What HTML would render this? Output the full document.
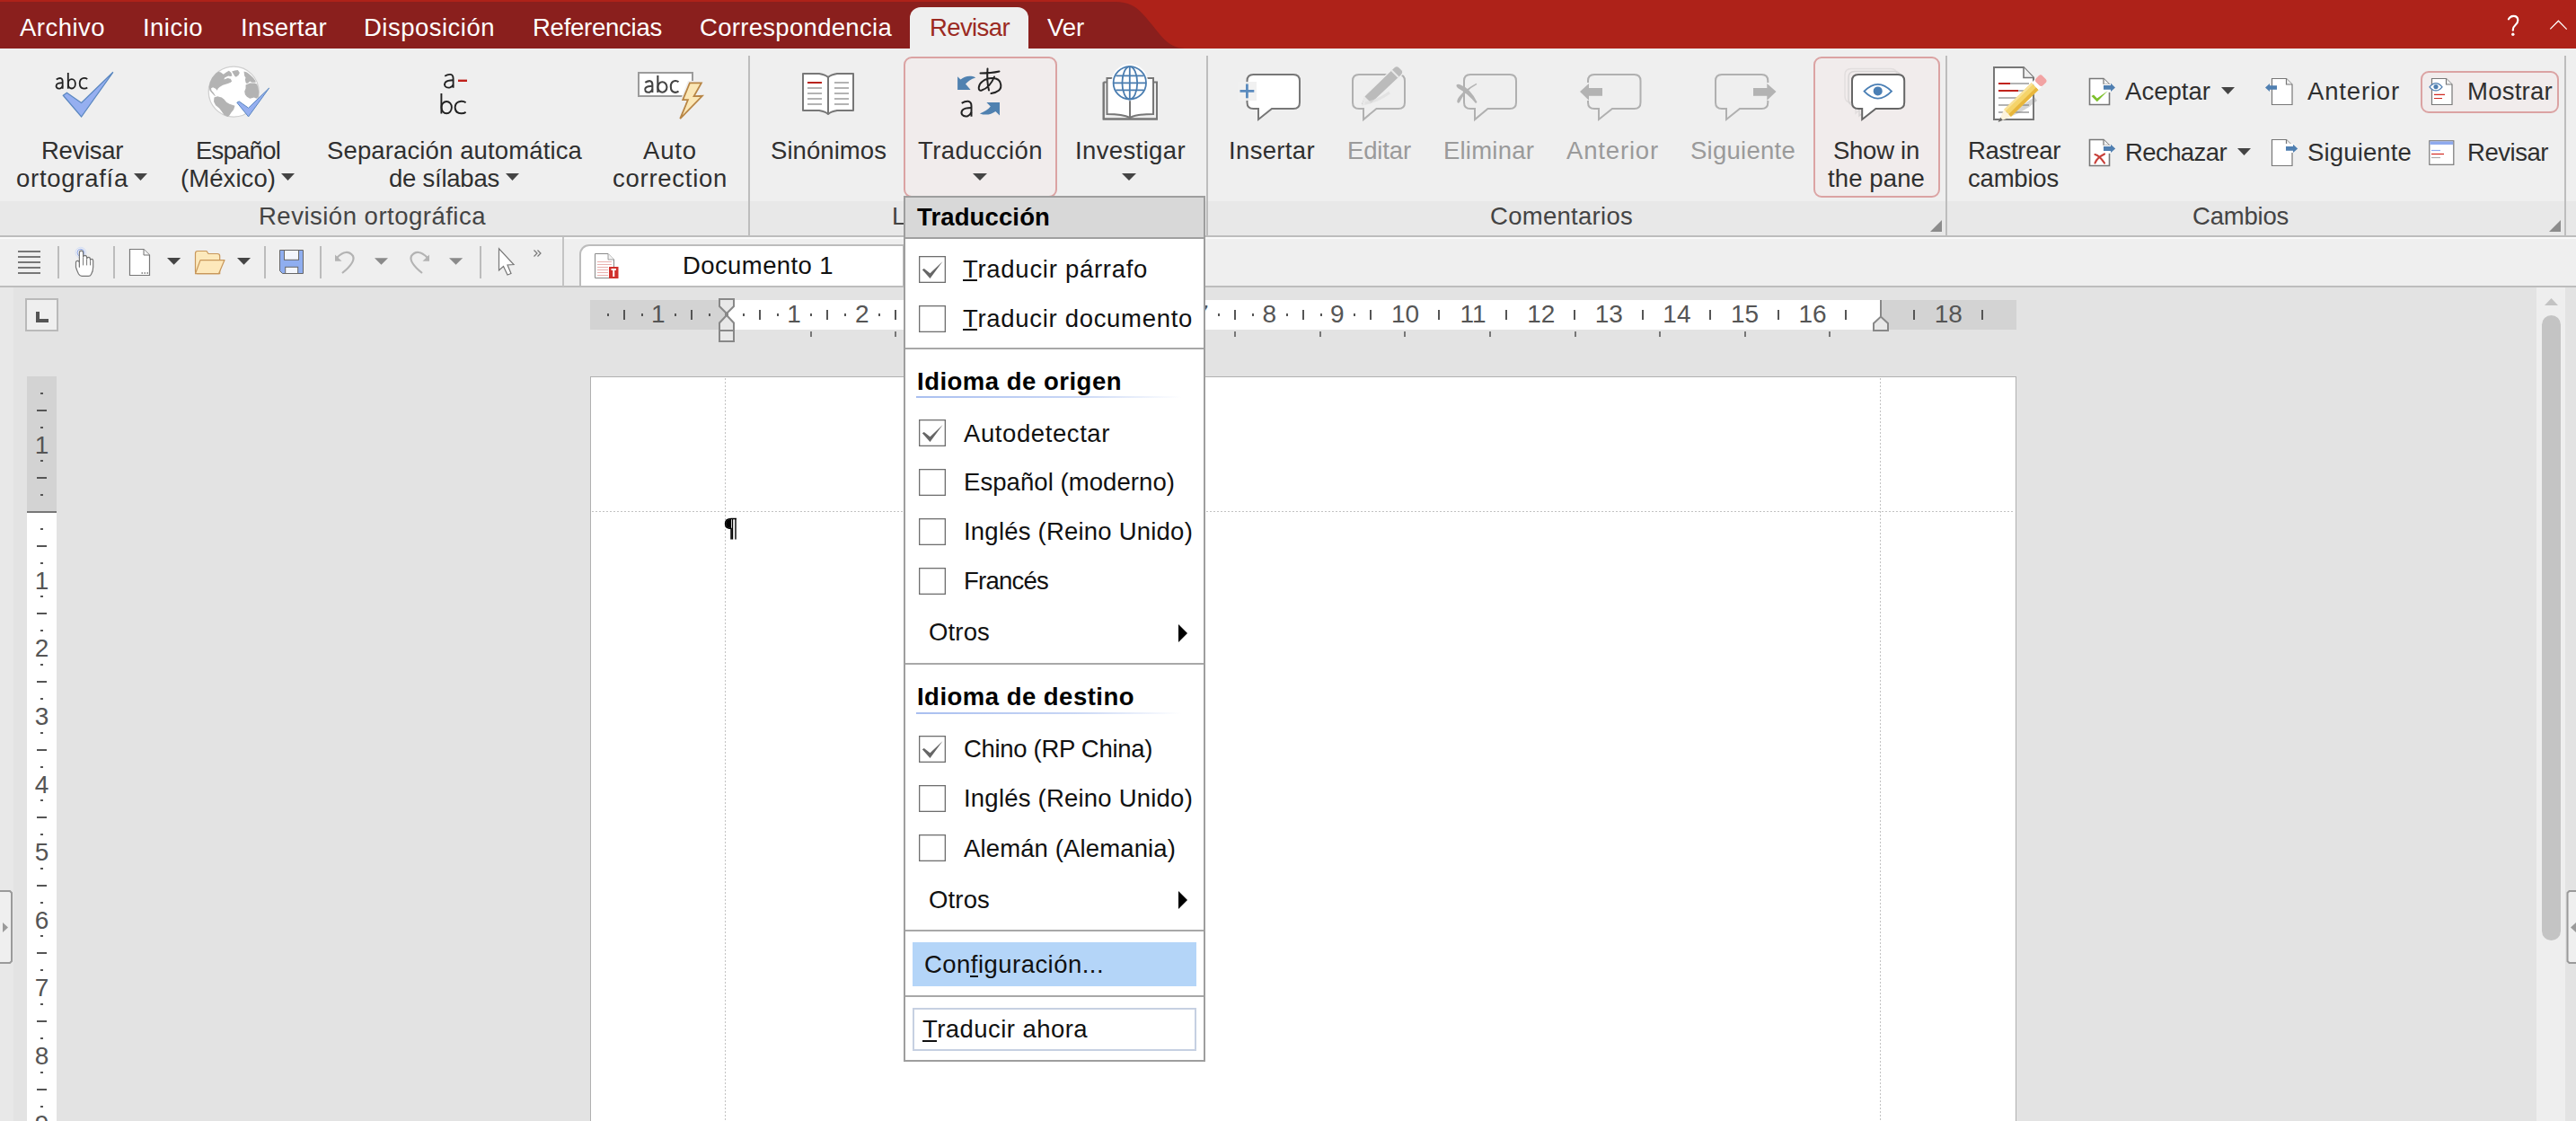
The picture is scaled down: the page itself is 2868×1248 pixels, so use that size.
<!DOCTYPE html><html><head><meta charset="utf-8"><style>
html,body{margin:0;padding:0;width:2868px;height:1248px;overflow:hidden;background:#e3e3e3}
body>div,body>svg{position:absolute}
.t{white-space:nowrap;font-family:"Liberation Sans",sans-serif}
body{font-family:"Liberation Sans",sans-serif}
</style></head><body>
<div style="left:0px;top:0px;width:2868px;height:1248px;background:#e3e3e3;"></div>
<div style="left:0px;top:0px;width:2868px;height:54px;background:#ae2219;"></div>
<svg style="left:0px;top:0px" width="1400" height="54" viewBox="0 0 1400 54"><path d="M0 2 H1242 C1262 2 1270 12 1283 28 C1297 46 1304 54 1322 54 H0 Z" fill="#8a1f1d"/></svg>
<div style="left:1013px;top:8px;width:132px;height:47px;background:#efefef;border-radius:12px 12px 0 0;"></div>
<div class="t" style="left:22.00px;top:16.72px;font-size:27.5px;line-height:27.5px;color:#ffffff;letter-spacing:0.472px;">Archivo</div>
<div class="t" style="left:159.00px;top:16.72px;font-size:27.5px;line-height:27.5px;color:#ffffff;letter-spacing:0.467px;">Inicio</div>
<div class="t" style="left:268.00px;top:16.72px;font-size:27.5px;line-height:27.5px;color:#ffffff;letter-spacing:0.346px;">Insertar</div>
<div class="t" style="left:405.00px;top:16.72px;font-size:27.5px;line-height:27.5px;color:#ffffff;letter-spacing:0.490px;">Disposición</div>
<div class="t" style="left:593.00px;top:16.72px;font-size:27.5px;line-height:27.5px;color:#ffffff;letter-spacing:-0.249px;">Referencias</div>
<div class="t" style="left:779.00px;top:16.72px;font-size:27.5px;line-height:27.5px;color:#ffffff;letter-spacing:0.305px;">Correspondencia</div>
<div class="t" style="left:1035.00px;top:16.72px;font-size:27.5px;line-height:27.5px;color:#9b2a22;letter-spacing:-0.602px;">Revisar</div>
<div class="t" style="left:1166.00px;top:16.72px;font-size:27.5px;line-height:27.5px;color:#ffffff;letter-spacing:-0.092px;">Ver</div>
<svg style="left:0px;top:0px" width="2868" height="50" viewBox="0 0 2868 50"><path d="M2793 21.3 Q2794.8 17.9 2798.4 17.9 Q2803.3 17.9 2803.3 22.6 Q2803.3 25.6 2800.4 28 Q2797.6 30.4 2797.8 33.6" fill="none" stroke="#fff" stroke-width="2.2" stroke-linecap="round"/><circle cx="2797.8" cy="38.3" r="1.7" fill="#fff"/><path d="M2839.3 32.4 L2848.4 23.2 L2857.7 32.6" fill="none" stroke="#fff" stroke-width="1.3"/></svg>
<div style="left:0px;top:54px;width:2868px;height:170px;background:#efefef;"></div>
<div style="left:0px;top:224px;width:2868px;height:38px;background:#e8e8e8;"></div>
<div style="left:0px;top:262px;width:2868px;height:2px;background:#bdbdbd;"></div>
<div style="left:833px;top:62px;width:2px;height:201px;background:#bdbdbd;"></div>
<div style="left:1343px;top:62px;width:2px;height:201px;background:#bdbdbd;"></div>
<div style="left:2166px;top:62px;width:2px;height:201px;background:#bdbdbd;"></div>
<div style="left:2855px;top:62px;width:2px;height:201px;background:#bdbdbd;"></div>
<div class="t" style="left:288.00px;top:226.72px;font-size:27.5px;line-height:27.5px;color:#444;letter-spacing:0.499px;">Revisión ortográfica</div>
<div class="t" style="left:993.00px;top:226.72px;font-size:27.5px;line-height:27.5px;color:#444;">Lenguaje</div>
<div class="t" style="left:1659.00px;top:226.72px;font-size:27.5px;line-height:27.5px;color:#444;letter-spacing:0.282px;">Comentarios</div>
<div class="t" style="left:2441.00px;top:226.72px;font-size:27.5px;line-height:27.5px;color:#444;letter-spacing:-0.215px;">Cambios</div>
<div class="t" style="left:46.00px;top:153.72px;font-size:27.5px;line-height:27.5px;color:#2f2f2f;letter-spacing:-0.316px;">Revisar</div>
<div class="t" style="left:18.00px;top:184.72px;font-size:27.5px;line-height:27.5px;color:#2f2f2f;letter-spacing:0.729px;">ortografía</div>
<div class="t" style="left:218.00px;top:153.72px;font-size:27.5px;line-height:27.5px;color:#2f2f2f;letter-spacing:-0.768px;">Español</div>
<div class="t" style="left:201.00px;top:184.72px;font-size:27.5px;line-height:27.5px;color:#2f2f2f;letter-spacing:0.072px;">(México)</div>
<div class="t" style="left:364.00px;top:153.72px;font-size:27.5px;line-height:27.5px;color:#2f2f2f;letter-spacing:0.130px;">Separación automática</div>
<div class="t" style="left:433.00px;top:184.72px;font-size:27.5px;line-height:27.5px;color:#2f2f2f;letter-spacing:-0.236px;">de sílabas</div>
<div class="t" style="left:716.00px;top:153.72px;font-size:27.5px;line-height:27.5px;color:#2f2f2f;letter-spacing:0.857px;">Auto</div>
<div class="t" style="left:682.00px;top:184.72px;font-size:27.5px;line-height:27.5px;color:#2f2f2f;letter-spacing:0.726px;">correction</div>
<div class="t" style="left:858.00px;top:153.72px;font-size:27.5px;line-height:27.5px;color:#2f2f2f;letter-spacing:0.067px;">Sinónimos</div>
<div style="left:1006px;top:63px;width:171px;height:157px;background:#f1ecec;border:2px solid #dba3a3;border-radius:9px;box-sizing:border-box;"></div>
<div class="t" style="left:1022.00px;top:153.72px;font-size:27.5px;line-height:27.5px;color:#2f2f2f;letter-spacing:0.399px;">Traducción</div>
<div class="t" style="left:1197.00px;top:153.72px;font-size:27.5px;line-height:27.5px;color:#2f2f2f;letter-spacing:0.378px;">Investigar</div>
<div class="t" style="left:1368.00px;top:153.72px;font-size:27.5px;line-height:27.5px;color:#2f2f2f;letter-spacing:0.346px;">Insertar</div>
<div class="t" style="left:1500.00px;top:153.72px;font-size:27.5px;line-height:27.5px;color:#9a9a9a;letter-spacing:-0.140px;">Editar</div>
<div class="t" style="left:1607.00px;top:153.72px;font-size:27.5px;line-height:27.5px;color:#9a9a9a;letter-spacing:0.210px;">Eliminar</div>
<div class="t" style="left:1744.00px;top:153.72px;font-size:27.5px;line-height:27.5px;color:#9a9a9a;letter-spacing:0.839px;">Anterior</div>
<div class="t" style="left:1882.00px;top:153.72px;font-size:27.5px;line-height:27.5px;color:#9a9a9a;letter-spacing:0.259px;">Siguiente</div>
<div style="left:2019px;top:63px;width:141px;height:157px;background:#f1ecec;border:2px solid #dba3a3;border-radius:9px;box-sizing:border-box;"></div>
<div class="t" style="left:2041.00px;top:153.72px;font-size:27.5px;line-height:27.5px;color:#2f2f2f;letter-spacing:-0.262px;">Show in</div>
<div class="t" style="left:2035.00px;top:184.72px;font-size:27.5px;line-height:27.5px;color:#2f2f2f;letter-spacing:0.120px;">the pane</div>
<div class="t" style="left:2191.00px;top:153.72px;font-size:27.5px;line-height:27.5px;color:#2f2f2f;letter-spacing:-0.306px;">Rastrear</div>
<div class="t" style="left:2191.00px;top:184.72px;font-size:27.5px;line-height:27.5px;color:#2f2f2f;letter-spacing:-0.200px;">cambios</div>
<div class="t" style="left:2366.00px;top:87.72px;font-size:27.5px;line-height:27.5px;color:#2f2f2f;letter-spacing:0.033px;">Aceptar</div>
<div class="t" style="left:2569.00px;top:87.72px;font-size:27.5px;line-height:27.5px;color:#2f2f2f;letter-spacing:0.839px;">Anterior</div>
<div style="left:2695px;top:79px;width:154px;height:47px;background:#f1ecec;border:2px solid #dba3a3;border-radius:9px;box-sizing:border-box;"></div>
<div class="t" style="left:2747.00px;top:87.72px;font-size:27.5px;line-height:27.5px;color:#2f2f2f;letter-spacing:0.257px;">Mostrar</div>
<div class="t" style="left:2366.00px;top:155.72px;font-size:27.5px;line-height:27.5px;color:#2f2f2f;letter-spacing:-0.587px;">Rechazar</div>
<div class="t" style="left:2569.00px;top:155.72px;font-size:27.5px;line-height:27.5px;color:#2f2f2f;letter-spacing:0.148px;">Siguiente</div>
<div class="t" style="left:2747.00px;top:155.72px;font-size:27.5px;line-height:27.5px;color:#2f2f2f;letter-spacing:-0.459px;">Revisar</div>
<svg style="left:149px;top:193px" width="15" height="8" viewBox="0 0 15 8"><path d="M0 0 H15 L7.5 8 Z" fill="#444"/></svg>
<svg style="left:313px;top:193px" width="15" height="8" viewBox="0 0 15 8"><path d="M0 0 H15 L7.5 8 Z" fill="#444"/></svg>
<svg style="left:563px;top:193px" width="15" height="8" viewBox="0 0 15 8"><path d="M0 0 H15 L7.5 8 Z" fill="#444"/></svg>
<svg style="left:1083px;top:193px" width="16" height="8" viewBox="0 0 16 8"><path d="M0 0 H16 L8.0 8 Z" fill="#444"/></svg>
<svg style="left:1249px;top:193px" width="16" height="8" viewBox="0 0 16 8"><path d="M0 0 H16 L8.0 8 Z" fill="#444"/></svg>
<svg style="left:2473px;top:97px" width="15" height="8" viewBox="0 0 15 8"><path d="M0 0 H15 L7.5 8 Z" fill="#444"/></svg>
<svg style="left:2491px;top:165px" width="15" height="8" viewBox="0 0 15 8"><path d="M0 0 H15 L7.5 8 Z" fill="#444"/></svg>
<div style="left:0px;top:264px;width:2868px;height:55px;background:#efefef;"></div>
<div style="left:0px;top:264px;width:2868px;height:2px;background:#fafafa;"></div>
<div style="left:0px;top:318px;width:2868px;height:2px;background:#bdbdbd;"></div>
<div style="left:626px;top:264px;width:2px;height:55px;background:#c4c4c4;"></div>
<div style="left:64px;top:274px;width:2px;height:36px;background:#bcbcbc;"></div>
<div style="left:126px;top:274px;width:2px;height:36px;background:#bcbcbc;"></div>
<div style="left:294px;top:274px;width:2px;height:36px;background:#bcbcbc;"></div>
<div style="left:356px;top:274px;width:2px;height:36px;background:#bcbcbc;"></div>
<div style="left:534px;top:274px;width:2px;height:36px;background:#bcbcbc;"></div>
<div style="left:645px;top:272px;width:362px;height:46px;background:#fff;border:2px solid #bcbcbc;border-bottom:none;border-radius:11px 0 0 0;box-sizing:border-box;"></div>
<div class="t" style="left:760.00px;top:281.72px;font-size:27.5px;line-height:27.5px;color:#111;letter-spacing:0.404px;">Documento 1</div>
<div style="left:0px;top:320px;width:15px;height:928px;background:#e8e8e8;"></div>
<div style="left:28px;top:332px;width:37px;height:37px;background:#efefef;border:2px solid #b9b9b9;box-sizing:border-box;"></div>
<div style="left:657px;top:334px;width:1588px;height:33px;background:#d3d3d3;"></div>
<div style="left:808px;top:334px;width:1287px;height:33px;background:#ffffff;"></div>
<div style="left:30px;top:419px;width:33px;height:829px;background:#ffffff;"></div>
<div style="left:30px;top:419px;width:33px;height:151px;background:#d3d3d3;"></div>
<div style="left:657px;top:419px;width:1588px;height:829px;background:#ffffff;border-left:1px solid #b0b0b0;border-top:1px solid #b0b0b0;border-right:1px solid #b0b0b0;box-sizing:border-box;"></div>
<div style="left:2824px;top:320px;width:32px;height:928px;background:#eeeeee;"></div>
<div style="left:2830px;top:351px;width:21px;height:696px;background:#c4c4c4;border-radius:11px;"></div>
<div style="left:40px;top:347px;width:4px;height:12px;background:#555;"></div>
<div style="left:40px;top:355px;width:14px;height:4px;background:#555;"></div>
<div class="t" style="left:725.11px;top:336.29px;font-size:28px;line-height:28px;color:#555;">1</div>
<div class="t" style="left:876.31px;top:336.29px;font-size:28px;line-height:28px;color:#555;">1</div>
<div class="t" style="left:951.91px;top:336.29px;font-size:28px;line-height:28px;color:#555;">2</div>
<div class="t" style="left:1027.51px;top:336.29px;font-size:28px;line-height:28px;color:#555;">3</div>
<div class="t" style="left:1103.11px;top:336.29px;font-size:28px;line-height:28px;color:#555;">4</div>
<div class="t" style="left:1178.71px;top:336.29px;font-size:28px;line-height:28px;color:#555;">5</div>
<div class="t" style="left:1254.31px;top:336.29px;font-size:28px;line-height:28px;color:#555;">6</div>
<div class="t" style="left:1329.91px;top:336.29px;font-size:28px;line-height:28px;color:#555;">7</div>
<div class="t" style="left:1405.51px;top:336.29px;font-size:28px;line-height:28px;color:#555;">8</div>
<div class="t" style="left:1481.11px;top:336.29px;font-size:28px;line-height:28px;color:#555;">9</div>
<div class="t" style="left:1548.93px;top:336.29px;font-size:28px;line-height:28px;color:#555;">10</div>
<div class="t" style="left:1625.57px;top:336.29px;font-size:28px;line-height:28px;color:#555;">11</div>
<div class="t" style="left:1700.13px;top:336.29px;font-size:28px;line-height:28px;color:#555;">12</div>
<div class="t" style="left:1775.73px;top:336.29px;font-size:28px;line-height:28px;color:#555;">13</div>
<div class="t" style="left:1851.33px;top:336.29px;font-size:28px;line-height:28px;color:#555;">14</div>
<div class="t" style="left:1926.93px;top:336.29px;font-size:28px;line-height:28px;color:#555;">15</div>
<div class="t" style="left:2002.53px;top:336.29px;font-size:28px;line-height:28px;color:#555;">16</div>
<div class="t" style="left:2153.73px;top:336.29px;font-size:28px;line-height:28px;color:#555;">18</div>
<div style="left:676px;top:349px;width:2px;height:3px;background:#555555;"></div>
<div style="left:694px;top:345px;width:2px;height:11px;background:#555555;"></div>
<div style="left:714px;top:349px;width:2px;height:3px;background:#555555;"></div>
<div style="left:751px;top:349px;width:2px;height:3px;background:#555555;"></div>
<div style="left:769px;top:345px;width:2px;height:11px;background:#555555;"></div>
<div style="left:789px;top:349px;width:2px;height:3px;background:#555555;"></div>
<div style="left:827px;top:349px;width:2px;height:3px;background:#555555;"></div>
<div style="left:845px;top:345px;width:2px;height:11px;background:#555555;"></div>
<div style="left:865px;top:349px;width:2px;height:3px;background:#555555;"></div>
<div style="left:902px;top:349px;width:2px;height:3px;background:#555555;"></div>
<div style="left:920px;top:345px;width:2px;height:11px;background:#555555;"></div>
<div style="left:940px;top:349px;width:2px;height:3px;background:#555555;"></div>
<div style="left:978px;top:349px;width:2px;height:3px;background:#555555;"></div>
<div style="left:996px;top:345px;width:2px;height:11px;background:#555555;"></div>
<div style="left:1016px;top:349px;width:2px;height:3px;background:#555555;"></div>
<div style="left:1054px;top:349px;width:2px;height:3px;background:#555555;"></div>
<div style="left:1072px;top:345px;width:2px;height:11px;background:#555555;"></div>
<div style="left:1092px;top:349px;width:2px;height:3px;background:#555555;"></div>
<div style="left:1129px;top:349px;width:2px;height:3px;background:#555555;"></div>
<div style="left:1147px;top:345px;width:2px;height:11px;background:#555555;"></div>
<div style="left:1167px;top:349px;width:2px;height:3px;background:#555555;"></div>
<div style="left:1205px;top:349px;width:2px;height:3px;background:#555555;"></div>
<div style="left:1223px;top:345px;width:2px;height:11px;background:#555555;"></div>
<div style="left:1243px;top:349px;width:2px;height:3px;background:#555555;"></div>
<div style="left:1280px;top:349px;width:2px;height:3px;background:#555555;"></div>
<div style="left:1298px;top:345px;width:2px;height:11px;background:#555555;"></div>
<div style="left:1318px;top:349px;width:2px;height:3px;background:#555555;"></div>
<div style="left:1356px;top:349px;width:2px;height:3px;background:#555555;"></div>
<div style="left:1374px;top:345px;width:2px;height:11px;background:#555555;"></div>
<div style="left:1394px;top:349px;width:2px;height:3px;background:#555555;"></div>
<div style="left:1432px;top:349px;width:2px;height:3px;background:#555555;"></div>
<div style="left:1450px;top:345px;width:2px;height:11px;background:#555555;"></div>
<div style="left:1470px;top:349px;width:2px;height:3px;background:#555555;"></div>
<div style="left:1507px;top:349px;width:2px;height:3px;background:#555555;"></div>
<div style="left:1525px;top:345px;width:2px;height:11px;background:#555555;"></div>
<div style="left:1601px;top:345px;width:2px;height:11px;background:#555555;"></div>
<div style="left:1676px;top:345px;width:2px;height:11px;background:#555555;"></div>
<div style="left:1752px;top:345px;width:2px;height:11px;background:#555555;"></div>
<div style="left:1828px;top:345px;width:2px;height:11px;background:#555555;"></div>
<div style="left:1903px;top:345px;width:2px;height:11px;background:#555555;"></div>
<div style="left:1979px;top:345px;width:2px;height:11px;background:#555555;"></div>
<div style="left:2054px;top:345px;width:2px;height:11px;background:#555555;"></div>
<div style="left:2130px;top:345px;width:2px;height:11px;background:#555555;"></div>
<div style="left:2206px;top:345px;width:2px;height:11px;background:#555555;"></div>
<div style="left:902px;top:369px;width:2px;height:6px;background:#777;"></div>
<div style="left:996px;top:369px;width:2px;height:6px;background:#777;"></div>
<div style="left:1091px;top:369px;width:2px;height:6px;background:#777;"></div>
<div style="left:1185px;top:369px;width:2px;height:6px;background:#777;"></div>
<div style="left:1280px;top:369px;width:2px;height:6px;background:#777;"></div>
<div style="left:1374px;top:369px;width:2px;height:6px;background:#777;"></div>
<div style="left:1469px;top:369px;width:2px;height:6px;background:#777;"></div>
<div style="left:1563px;top:369px;width:2px;height:6px;background:#777;"></div>
<div style="left:1658px;top:369px;width:2px;height:6px;background:#777;"></div>
<div style="left:1753px;top:369px;width:2px;height:6px;background:#777;"></div>
<div style="left:1847px;top:369px;width:2px;height:6px;background:#777;"></div>
<div style="left:1942px;top:369px;width:2px;height:6px;background:#777;"></div>
<div style="left:2036px;top:369px;width:2px;height:6px;background:#777;"></div>
<svg style="left:0px;top:0px" width="830" height="390" viewBox="0 0 830 390"><path d="M801 333 H817 V341 L810 348 V352 L817 359.5 V380 H801 V359.5 L808 352 V348 L801 341 Z" fill="#e8e8e8" stroke="#888" stroke-width="2" stroke-linejoin="miter"/><path d="M801 368 H817" stroke="#888" stroke-width="2"/></svg>
<svg style="left:0px;top:0px" width="2110" height="390" viewBox="0 0 2110 390"><path d="M2094 334 V352" stroke="#888" stroke-width="2"/><path d="M2086 360 L2094 352.5 L2102 360 V368 H2086 Z" fill="#e8e8e8" stroke="#888" stroke-width="2"/></svg>
<div style="left:30px;top:569px;width:33px;height:2px;background:#777;"></div>
<div style="left:45px;top:437px;width:3px;height:2px;background:#555555;"></div>
<div style="left:41px;top:456px;width:11px;height:2px;background:#555555;"></div>
<div style="left:45px;top:475px;width:3px;height:2px;background:#555555;"></div>
<div class="t" style="left:38.71px;top:481.69px;font-size:28px;line-height:28px;color:#555;">1</div>
<div style="left:45px;top:512px;width:3px;height:2px;background:#555555;"></div>
<div style="left:41px;top:531px;width:11px;height:2px;background:#555555;"></div>
<div style="left:45px;top:550px;width:3px;height:2px;background:#555555;"></div>
<div style="left:45px;top:588px;width:3px;height:2px;background:#555555;"></div>
<div style="left:41px;top:607px;width:11px;height:2px;background:#555555;"></div>
<div style="left:45px;top:626px;width:3px;height:2px;background:#555555;"></div>
<div class="t" style="left:38.71px;top:632.89px;font-size:28px;line-height:28px;color:#555;">1</div>
<div style="left:45px;top:663px;width:3px;height:2px;background:#555555;"></div>
<div style="left:41px;top:682px;width:11px;height:2px;background:#555555;"></div>
<div style="left:45px;top:701px;width:3px;height:2px;background:#555555;"></div>
<div class="t" style="left:38.71px;top:708.49px;font-size:28px;line-height:28px;color:#555;">2</div>
<div style="left:45px;top:739px;width:3px;height:2px;background:#555555;"></div>
<div style="left:41px;top:758px;width:11px;height:2px;background:#555555;"></div>
<div style="left:45px;top:777px;width:3px;height:2px;background:#555555;"></div>
<div class="t" style="left:38.71px;top:784.09px;font-size:28px;line-height:28px;color:#555;">3</div>
<div style="left:45px;top:815px;width:3px;height:2px;background:#555555;"></div>
<div style="left:41px;top:834px;width:11px;height:2px;background:#555555;"></div>
<div style="left:45px;top:853px;width:3px;height:2px;background:#555555;"></div>
<div class="t" style="left:38.71px;top:859.69px;font-size:28px;line-height:28px;color:#555;">4</div>
<div style="left:45px;top:890px;width:3px;height:2px;background:#555555;"></div>
<div style="left:41px;top:909px;width:11px;height:2px;background:#555555;"></div>
<div style="left:45px;top:928px;width:3px;height:2px;background:#555555;"></div>
<div class="t" style="left:38.71px;top:935.29px;font-size:28px;line-height:28px;color:#555;">5</div>
<div style="left:45px;top:966px;width:3px;height:2px;background:#555555;"></div>
<div style="left:41px;top:985px;width:11px;height:2px;background:#555555;"></div>
<div style="left:45px;top:1004px;width:3px;height:2px;background:#555555;"></div>
<div class="t" style="left:38.71px;top:1010.89px;font-size:28px;line-height:28px;color:#555;">6</div>
<div style="left:45px;top:1041px;width:3px;height:2px;background:#555555;"></div>
<div style="left:41px;top:1060px;width:11px;height:2px;background:#555555;"></div>
<div style="left:45px;top:1079px;width:3px;height:2px;background:#555555;"></div>
<div class="t" style="left:38.71px;top:1086.49px;font-size:28px;line-height:28px;color:#555;">7</div>
<div style="left:45px;top:1117px;width:3px;height:2px;background:#555555;"></div>
<div style="left:41px;top:1136px;width:11px;height:2px;background:#555555;"></div>
<div style="left:45px;top:1155px;width:3px;height:2px;background:#555555;"></div>
<div class="t" style="left:38.71px;top:1162.09px;font-size:28px;line-height:28px;color:#555;">8</div>
<div style="left:45px;top:1193px;width:3px;height:2px;background:#555555;"></div>
<div style="left:41px;top:1212px;width:11px;height:2px;background:#555555;"></div>
<div style="left:45px;top:1231px;width:3px;height:2px;background:#555555;"></div>
<div class="t" style="left:38.71px;top:1237.69px;font-size:28px;line-height:28px;color:#555;">9</div>
<div style="left:807px;top:421px;width:1px;height:827px;background:repeating-linear-gradient(180deg,#c2c2c2 0 2px,transparent 2px 4px);"></div>
<div style="left:2093px;top:421px;width:1px;height:827px;background:repeating-linear-gradient(180deg,#c2c2c2 0 2px,transparent 2px 4px);"></div>
<div style="left:659px;top:569px;width:1584px;height:1px;background:repeating-linear-gradient(90deg,#c2c2c2 0 2px,transparent 2px 4px);"></div>
<svg style="left:0px;top:0px" width="830" height="610" viewBox="0 0 830 610"><path d="M820 577.5 H814 Q807.5 577.5 807.5 583 Q807.5 588.5 814 588.5 V600.5 M815.5 578 V600.5 M819 578 V600.5" fill="none" stroke="#000" stroke-width="1.4"/><path d="M814 578 Q808 578 808 583 Q808 588 814 588 Z" fill="#000"/></svg>
<svg style="left:0px;top:0px" width="2860" height="350" viewBox="0 0 2860 350"><path d="M2833 340 L2840.5 332 L2848 340 Z" fill="#c3c3c3"/></svg>
<svg style="left:0px;top:0px" width="20" height="1080" viewBox="0 0 20 1080"><path d="M0 992 H11 L13 994 V1070 L11 1072 H0" fill="#efefef" stroke="#9a9a9a" stroke-width="2"/><path d="M3 1027 L9 1032.5 L3 1038 Z" fill="#9a9a9a"/></svg>
<svg style="left:0px;top:0px" width="2868" height="1080" viewBox="0 0 2868 1080"><path d="M2868 992 H2860.5 L2858.5 994 V1070 L2860.5 1072 H2868" fill="#efefef" stroke="#9a9a9a" stroke-width="2"/><path d="M2868 1027 L2862 1032.5 L2868 1038 Z" fill="#9a9a9a"/></svg>
<div style="left:1006px;top:218px;width:336px;height:964px;background:#ffffff;border:2px solid #9e9e9e;box-sizing:border-box;"></div>
<div style="left:1008px;top:220px;width:332px;height:45px;background:#d8d8d8;"></div>
<div style="left:1008px;top:264px;width:332px;height:2px;background:#a0a0a0;"></div>
<div class="t" style="left:1021.00px;top:227.72px;font-size:27.5px;line-height:27.5px;color:#000;letter-spacing:0.130px;font-weight:bold;">Traducción</div>
<svg style="left:1023px;top:285px" width="30" height="30" viewBox="0 0 30 30"><rect x="0.65" y="0.65" width="28.7" height="28.7" fill="#fff" stroke="#6e6e6e" stroke-width="1.3"/><path d="M3.8 15.3 L5.8 13.9 L12.5 19.3 L26.5 6 L12.5 24.9 Z" fill="#666"/></svg>
<div class="t" style="left:1072.00px;top:285.72px;font-size:27.5px;line-height:27.5px;color:#111;letter-spacing:0.712px;">Traducir párrafo</div>
<div style="left:1072px;top:311px;width:16px;height:2px;background:#111;"></div>
<svg style="left:1023px;top:340px" width="30" height="30" viewBox="0 0 30 30"><rect x="0.65" y="0.65" width="28.7" height="28.7" fill="#fff" stroke="#6e6e6e" stroke-width="1.3"/></svg>
<div class="t" style="left:1072.00px;top:340.72px;font-size:27.5px;line-height:27.5px;color:#111;letter-spacing:0.692px;">Traducir documento</div>
<div style="left:1072px;top:366px;width:16px;height:2px;background:#111;"></div>
<div style="left:1008px;top:387px;width:332px;height:2px;background:#a8a8a8;"></div>
<div class="t" style="left:1021.00px;top:410.72px;font-size:27.5px;line-height:27.5px;color:#000;letter-spacing:0.498px;font-weight:bold;">Idioma de origen</div>
<div style="left:1020px;top:441px;width:295px;height:2px;background:linear-gradient(90deg,#a9bff0,#c8d6f5 60%,#ffffff);"></div>
<svg style="left:1023px;top:467px" width="30" height="30" viewBox="0 0 30 30"><rect x="0.65" y="0.65" width="28.7" height="28.7" fill="#fff" stroke="#6e6e6e" stroke-width="1.3"/><path d="M3.8 15.3 L5.8 13.9 L12.5 19.3 L26.5 6 L12.5 24.9 Z" fill="#666"/></svg>
<div class="t" style="left:1073.00px;top:468.72px;font-size:27.5px;line-height:27.5px;color:#111;letter-spacing:0.589px;">Autodetectar</div>
<svg style="left:1023px;top:522px" width="30" height="30" viewBox="0 0 30 30"><rect x="0.65" y="0.65" width="28.7" height="28.7" fill="#fff" stroke="#6e6e6e" stroke-width="1.3"/></svg>
<div class="t" style="left:1073.00px;top:522.72px;font-size:27.5px;line-height:27.5px;color:#111;letter-spacing:0.067px;">Español (moderno)</div>
<svg style="left:1023px;top:577px" width="30" height="30" viewBox="0 0 30 30"><rect x="0.65" y="0.65" width="28.7" height="28.7" fill="#fff" stroke="#6e6e6e" stroke-width="1.3"/></svg>
<div class="t" style="left:1073.00px;top:577.72px;font-size:27.5px;line-height:27.5px;color:#111;letter-spacing:0.216px;">Inglés (Reino Unido)</div>
<svg style="left:1023px;top:632px" width="30" height="30" viewBox="0 0 30 30"><rect x="0.65" y="0.65" width="28.7" height="28.7" fill="#fff" stroke="#6e6e6e" stroke-width="1.3"/></svg>
<div class="t" style="left:1073.00px;top:632.72px;font-size:27.5px;line-height:27.5px;color:#111;letter-spacing:-0.763px;">Francés</div>
<div class="t" style="left:1034.00px;top:689.72px;font-size:27.5px;line-height:27.5px;color:#111;letter-spacing:0.153px;">Otros</div>
<svg style="left:1312px;top:695px" width="11" height="20" viewBox="0 0 11 20"><path d="M0 0 L10 10 L0 20 Z" fill="#000"/></svg>
<div style="left:1008px;top:738px;width:332px;height:2px;background:#a8a8a8;"></div>
<div class="t" style="left:1021.00px;top:761.72px;font-size:27.5px;line-height:27.5px;color:#000;letter-spacing:0.484px;font-weight:bold;">Idioma de destino</div>
<div style="left:1020px;top:793px;width:295px;height:2px;background:linear-gradient(90deg,#a9bff0,#c8d6f5 60%,#ffffff);"></div>
<svg style="left:1023px;top:819px" width="30" height="30" viewBox="0 0 30 30"><rect x="0.65" y="0.65" width="28.7" height="28.7" fill="#fff" stroke="#6e6e6e" stroke-width="1.3"/><path d="M3.8 15.3 L5.8 13.9 L12.5 19.3 L26.5 6 L12.5 24.9 Z" fill="#666"/></svg>
<div class="t" style="left:1073.00px;top:819.72px;font-size:27.5px;line-height:27.5px;color:#111;letter-spacing:-0.313px;">Chino (RP China)</div>
<svg style="left:1023px;top:874px" width="30" height="30" viewBox="0 0 30 30"><rect x="0.65" y="0.65" width="28.7" height="28.7" fill="#fff" stroke="#6e6e6e" stroke-width="1.3"/></svg>
<div class="t" style="left:1073.00px;top:874.72px;font-size:27.5px;line-height:27.5px;color:#111;letter-spacing:0.216px;">Inglés (Reino Unido)</div>
<svg style="left:1023px;top:929px" width="30" height="30" viewBox="0 0 30 30"><rect x="0.65" y="0.65" width="28.7" height="28.7" fill="#fff" stroke="#6e6e6e" stroke-width="1.3"/></svg>
<div class="t" style="left:1073.00px;top:930.72px;font-size:27.5px;line-height:27.5px;color:#111;letter-spacing:0.127px;">Alemán (Alemania)</div>
<div class="t" style="left:1034.00px;top:987.72px;font-size:27.5px;line-height:27.5px;color:#111;letter-spacing:0.153px;">Otros</div>
<svg style="left:1312px;top:992px" width="11" height="20" viewBox="0 0 11 20"><path d="M0 0 L10 10 L0 20 Z" fill="#000"/></svg>
<div style="left:1008px;top:1035px;width:332px;height:2px;background:#a8a8a8;"></div>
<div style="left:1016px;top:1049px;width:316px;height:49px;background:#b4d5f8;"></div>
<div class="t" style="left:1029.00px;top:1059.72px;font-size:27.5px;line-height:27.5px;color:#111;letter-spacing:0.462px;">Configuración...</div>
<div style="left:1080px;top:1086px;width:9px;height:2px;background:#111;"></div>
<div style="left:1008px;top:1108px;width:332px;height:2px;background:#a8a8a8;"></div>
<div style="left:1016px;top:1122px;width:316px;height:48px;background:#ffffff;border:2px solid #c6d0e2;box-sizing:border-box;"></div>
<div class="t" style="left:1027.00px;top:1131.72px;font-size:27.5px;line-height:27.5px;color:#111;letter-spacing:0.442px;">Traducir ahora</div>
<div style="left:1027px;top:1158px;width:16px;height:2px;background:#111;"></div>
<svg style="left:0px;top:0px" width="140" height="140" viewBox="0 0 140 140"><g fill="none" stroke="#222" stroke-width="1.8"><path d="M62.74 88.56 Q65.29 86.82 67.54 87.05 Q69.70 87.49 69.70 90.69 V98.75"/><path d="M69.70 92.08 Q64.88 92.08 63.20 93.89 Q62.05 95.61 63.04 97.33 Q64.48 99.06 67.18 98.39 Q69.07 97.68 69.70 95.43"/><path d="M75.80 81 V98.75"/><ellipse cx="79.85" cy="93.30" rx="4.05" ry="5.21"/><path d="M97.21 88.09 Q95.55 86.66 93.39 86.90 Q88.69 87.61 88.69 92.83 Q88.79 98.28 93.39 98.63 Q95.55 98.75 97.21 97.45"/></g></svg>
<svg style="left:0px;top:0px" width="140" height="140" viewBox="0 0 140 140"><path d="M70.3 106.25 L74.4 103.25 L90.6 114.5 L125.9 80.3 L90.6 130 Z" fill="#95aff0" stroke="#5a87c0" stroke-width="1.2" stroke-linejoin="miter"/></svg>
<svg style="left:0px;top:0px" width="310" height="140" viewBox="0 0 310 140"><circle cx="260.2" cy="102.1" r="28" fill="#fff" stroke="#cfcfcf" stroke-width="1.2"/>
<g transform="translate(220 65) scale(0.06693)" fill="#b3b3b3">
<path d="M190 470 L205 400 L240 320 L300 250 L345 222 L385 230 L430 265 L470 235 L520 205 L560 240 L575 290 L545 300 L510 290 L450 320 L440 350 L500 330 L550 340 L570 380 L545 405 L480 425 L420 445 L370 475 L340 500 L325 535 L300 505 L255 480 L225 495 L230 530 L270 580 L300 630 L280 620 L240 580 L200 530 Z"/>
<path d="M570 215 L620 200 L670 195 L700 240 L680 280 L640 310 L615 290 L590 250 Z"/>
<path d="M770 215 L820 230 L860 260 L900 300 L930 330 L960 370 L970 400 L900 400 L870 380 L840 410 L815 420 L800 400 L790 350 L800 320 L780 290 Z"/>
<path d="M800 440 L870 410 L950 410 L990 430 L1010 500 L1020 560 L1010 640 L980 670 L940 650 L870 670 L820 640 L790 600 L780 550 L800 500 Z"/>
<path d="M275 650 L330 630 L400 650 L440 680 L480 730 L530 760 L620 790 L600 850 L560 900 L530 950 L500 970 L440 940 L400 880 L360 830 L300 780 L270 720 Z"/>
</g>
<path d="M263.8 114.2 L266.2 112.9 L276.6 120.2 L299.6 98.1 L276.6 129.9 Z" fill="#95aff0" stroke="#5a87c0" stroke-width="1" stroke-linejoin="miter"/></svg>
<svg style="left:0px;top:0px" width="540" height="140" viewBox="0 0 540 140"><g fill="none" stroke="#222" stroke-width="1.9"><path d="M495.2 84.8 Q498.5 82.6 501.5 82.9 Q504.6 83.4 504.6 87.5 V97.8"/><path d="M504.6 89.3 Q498 89.3 495.8 91.6 Q494.3 93.8 495.6 96 Q497.5 98.2 501 97.4 Q503.5 96.5 504.6 94.5"/><path d="M491.4 104 V126.5"/><ellipse cx="497.2" cy="119.6" rx="5.7" ry="6.6"/><path d="M518.6 114.2 Q516.3 112.5 513.3 112.8 Q506.7 113.6 506.6 119.6 Q506.8 125.9 513.3 126.3 Q516.3 126.5 518.6 124.9"/></g><path d="M510 89.8 H520" stroke="#c0201a" stroke-width="2.4"/></svg>
<svg style="left:0px;top:0px" width="800" height="140" viewBox="0 0 800 140"><rect x="711" y="81" width="60" height="26" fill="#fff" stroke="#9b9b9b" stroke-width="2"/>
<path d="M766 90 L784 90 L776 106 L786 106 L756 134 L763 113 L757 113 Z" fill="#efefef"/>
<path d="M767.9 92.4 L780.9 92.4 L772.6 107.1 L781.9 106.8 L757.2 132.2 L765.9 111.2 L760.2 111.2 Z" fill="#fbe7b6" stroke="#b88646" stroke-width="1.8" stroke-linejoin="miter"/></svg>
<svg style="left:0px;top:0px" width="800" height="140" viewBox="0 0 800 140"><g fill="none" stroke="#444" stroke-width="2.1"><path d="M718.32 91.82 Q721.26 89.91 723.86 90.17 Q726.35 90.65 726.35 94.16 V103"/><path d="M726.35 95.68 Q720.79 95.68 718.85 97.67 Q717.52 99.56 718.66 101.44 Q720.33 103.34 723.45 102.61 Q725.63 101.83 726.35 99.36"/><path d="M732.35 84 V103"/><ellipse cx="737.40" cy="97.02" rx="5.05" ry="5.72"/><path d="M755.50 91.30 Q753.80 89.74 751.60 90.00 Q746.80 90.78 746.80 96.50 Q746.90 102.48 751.60 102.87 Q753.80 103.00 755.50 101.57"/></g></svg>
<svg style="left:0px;top:0px" width="960" height="140" viewBox="0 0 960 140"><path d="M894 82 L912 82 C918 83 920 84 922 86 C924 84 926 83 932 82 L950 82 L950 123 L932 123 C926 124 924 125 922 127 C920 125 918 124 912 123 L894 123 Z" fill="#fff" stroke="#777" stroke-width="2" stroke-linejoin="round"/>
<path d="M922 86 V127" stroke="#777" stroke-width="2"/>
<path d="M899 92 H915" stroke="#b8231c" stroke-width="2"/>
<path d="M899 98 H915 M899 104 H915 M899 110 H915 M899 116 H915 M929 92 H945 M929 98 H945 M929 104 H945 M929 110 H945 M929 116 H945" stroke="#b3b3b3" stroke-width="2"/></svg>
<svg style="left:0px;top:0px" width="1130" height="140" viewBox="0 0 1130 140"><path d="M1066.1 85.2 L1069.5 88.6 C1074 85 1080 83.5 1086.2 86.4 C1081 88 1077.5 90.5 1075 93.6 L1080.6 99.9 L1066.1 99.9 Z" fill="#5081b0"/>
<path d="M1098.4 114.1 L1113 114.1 L1113 128.6 L1108.4 124 C1103 128 1097 128.5 1090.9 126.4 C1096 124.5 1100 122 1102.8 118.6 Z" fill="#5081b0"/>
<path d="M1091.5 81.5 C1098 81.5 1106 81 1112.5 79.5 M1099.5 76.5 C1099 84 1099 93 1101 100.5 M1107 85.5 C1104 93 1099 98.5 1093 100.5 C1088 102 1089 94 1094 90.5 C1100 86 1112 85 1114 93 C1116 100 1110 103 1103.5 104" fill="none" stroke="#222" stroke-width="2" stroke-linecap="round"/></svg>
<svg style="left:0px;top:0px" width="1130" height="140" viewBox="0 0 1130 140"><g fill="none" stroke="#222" stroke-width="2.0"><path d="M1070.71 114.92 Q1074.54 112.38 1077.91 112.72 Q1081.50 113.36 1081.50 118.04 V129.8"/><path d="M1081.50 120.06 Q1073.91 120.06 1071.40 122.71 Q1069.67 125.22 1071.16 127.72 Q1073.32 130.25 1077.37 129.28 Q1080.20 128.24 1081.50 124.96"/><path style="display:none" d="M-99.00 -100 V129.8"/><ellipse style="display:none" cx="-95.00" cy="121.84" rx="4.00" ry="7.61"/><path style="display:none" d="M-90.70 114.23 Q-92.40 112.15 -94.60 112.50 Q-99.40 113.54 -99.40 121.15 Q-99.30 129.11 -94.60 129.63 Q-92.40 129.80 -90.70 127.90"/></g></svg>
<svg style="left:0px;top:0px" width="1300" height="140" viewBox="0 0 1300 140"><path d="M1228.7 91.5 L1232.5 91.5 M1228.7 91.5 L1228.7 132.5 L1288 132.5 L1288 91.5 L1284 91.5" fill="none" stroke="#777" stroke-width="2"/>
<path d="M1232.5 87 L1284 87 L1284 127 C1272 127 1264 128 1258 131 C1252 128 1244 127 1232.5 127 Z" fill="#fff" stroke="none"/><path d="M1240 87 L1232.5 87 L1232.5 127 C1244 127 1252 128 1258 131 C1264 128 1272 127 1284 127 L1284 87 L1276 87" fill="none" stroke="#777" stroke-width="2"/>
<path d="M1228.7 91.5 L1228.7 132.5 L1288 132.5 L1288 91.5" fill="none" stroke="#777" stroke-width="2"/>
<path d="M1258 112 V131" stroke="#777" stroke-width="2"/>
<circle cx="1257.8" cy="91.8" r="20.5" fill="#fff" opacity="0.9"/>
<g fill="none" stroke="#4a7db0" stroke-width="1.8">
<circle cx="1257.8" cy="92.3" r="18.2"/>
<ellipse cx="1257.8" cy="92.3" rx="8.4" ry="18.2"/>
<path d="M1257.8 74.1 V110.5 M1239.6 92.3 H1276 M1242.3 84.3 H1273.3 M1242.3 100.3 H1273.3"/>
</g></svg>
<svg style="left:0px;top:0px" width="1460" height="140" viewBox="0 0 1460 140"><path d="M1395.5 83 H1440 Q1447 83 1447 90 V114 Q1447 121 1440 121 H1416 L1401 133 V121 H1395.5 Q1388.5 121 1388.5 114 V90 Q1388.5 83 1395.5 83 Z" fill="#fff" stroke="#777" stroke-width="2" stroke-linejoin="miter"/><rect x="1378" y="91" width="21" height="21" fill="#efefef" opacity="0.9"/><path d="M1380.5 101.4 H1396.3 M1388.4 93.5 V109.3" stroke="#5a8bbe" stroke-width="2.8"/></svg>
<svg style="left:0px;top:0px" width="1580" height="140" viewBox="0 0 1580 140"><path d="M1513 83 H1557 Q1564 83 1564 90 V114 Q1564 121 1557 121 H1532.5 L1518 133 V121 H1513 Q1506 121 1506 114 V90 Q1506 83 1513 83 Z" fill="none" stroke="#b0b0b0" stroke-width="2" stroke-linejoin="miter"/><path d="M1515 117 L1519 107 L1552 75 Q1555 72 1558 75 L1561 78 Q1563 81 1560 84 L1527 115 Z" fill="#bbbbbb" stroke="#efefef" stroke-width="1.2"/><path d="M1519 107 L1527 115 L1516 118 Z" fill="#e8e8e8"/><path d="M1549 78 L1557 86" stroke="#e8e8e8" stroke-width="2"/><path d="M1520 115 Q1535 112 1547 103" stroke="#dedede" stroke-width="3" fill="none" opacity="0.7"/></svg>
<svg style="left:0px;top:0px" width="1700" height="140" viewBox="0 0 1700 140"><path d="M1637 83 H1681 Q1688 83 1688 90 V114 Q1688 121 1681 121 H1656.5 L1642 133 V121 H1637 Q1630 121 1630 114 V90 Q1630 83 1637 83 Z" fill="none" stroke="#b0b0b0" stroke-width="2" stroke-linejoin="miter"/><path d="M1621.5 96 Q1621 93 1625 94 Q1637 98 1644.5 113.8 L1643 115 Q1634 104 1623 98 Z" fill="#b3b3b3"/><path d="M1643.8 92.8 L1644.3 94 Q1631 101 1625 114 Q1623 115.5 1622.3 113.5 Q1622 110 1626 106 Q1632 99 1643.8 92.8 Z" fill="#b3b3b3"/></svg>
<svg style="left:0px;top:0px" width="1840" height="140" viewBox="0 0 1840 140"><path d="M1775 83 H1819.5 Q1826.5 83 1826.5 90 V114 Q1826.5 121 1819.5 121 H1795 L1780 133 V121 H1775 Q1768 121 1768 114 V90 Q1768 83 1775 83 Z" fill="none" stroke="#b0b0b0" stroke-width="2" stroke-linejoin="miter"/><rect x="1760" y="92" width="12" height="20" fill="#efefef"/><path d="M1759 102 L1769 93 V98 H1784 V106.7 H1769 V111.7 Z" fill="#b3b3b3"/></svg>
<svg style="left:0px;top:0px" width="1990" height="140" viewBox="0 0 1990 140"><path d="M1917 83 H1961.3 Q1968.3 83 1968.3 90 V114 Q1968.3 121 1961.3 121 H1937 L1922 133 V121 H1917 Q1910 121 1910 114 V90 Q1910 83 1917 83 Z" fill="none" stroke="#b0b0b0" stroke-width="2" stroke-linejoin="miter"/><rect x="1964" y="92" width="14" height="20" fill="#efefef"/><path d="M1977.5 102 L1967.3 93 V98 H1952 V106.7 H1967.3 V111.7 Z" fill="#b3b3b3"/></svg>
<svg style="left:0px;top:0px" width="2140" height="140" viewBox="0 0 2140 140"><path d="M2061 76.5 H2105 Q2112 76.5 2112 83.5 V107 Q2112 114 2105 114 H2080 L2066 126 V114 H2061 Q2054 114 2054 107 V83.5 Q2054 76.5 2061 76.5 Z" fill="none" stroke="#e2dede" stroke-width="1.5" stroke-linejoin="miter"/><path d="M2065 79.5 H2109 Q2116 79.5 2116 86.5 V110.5 Q2116 117.5 2109 117.5 H2084 L2070 129 V117.5 H2065 Q2058 117.5 2058 110.5 V86.5 Q2058 79.5 2065 79.5 Z" fill="none" stroke="#d8d5d5" stroke-width="1.5" stroke-linejoin="miter"/><path d="M2069 83 H2113.2 Q2120.2 83 2120.2 90 V114 Q2120.2 121 2113.2 121 H2088.4 L2073.2 133 V121 H2069 Q2062 121 2062 114 V90 Q2062 83 2069 83 Z" fill="#fff" stroke="#666" stroke-width="2" stroke-linejoin="miter"/><path d="M2075.5 101.7 Q2090.7 86 2106 101.7 Q2090.7 117.5 2075.5 101.7 Z" fill="none" stroke="#4a7fb5" stroke-width="1.8"/><circle cx="2090.7" cy="101.4" r="5" fill="#4a7fb5"/></svg>
<svg style="left:0px;top:0px" width="2300" height="140" viewBox="0 0 2300 140"><path d="M2220 75 H2253 L2264 86.5 V133 H2220 Z" fill="#fff" stroke="#777" stroke-width="2"/>
<path d="M2253 75 V86.5 H2264" fill="#efefef" stroke="#777" stroke-width="1.6"/>
<path d="M2225 93 H2259 M2225 101 H2259 M2225 109 H2259 M2225 117 H2259 M2225 125 H2259" stroke="#b3b3b3" stroke-width="2"/>
<path d="M2225 93 H2238 M2225 101 H2247" stroke="#c0231c" stroke-width="2"/>
<path d="M2232 131 Q2250 128 2268 112 L2265 108 Z" fill="#888" opacity="0.35"/>
<g transform="translate(2250 111.3) rotate(-44.2)">
<rect x="-21" y="-5.5" width="43" height="11" fill="#f5d46a"/>
<rect x="-21" y="-5.5" width="43" height="2.5" fill="#f9e29a"/>
<rect x="-21" y="1.8" width="43" height="3.7" fill="#e8b63c"/>
<path d="M-21 -5.5 L-35 0 L-21 5.5 Z" fill="#fdf3dc"/>
<path d="M-30 -2 L-35.5 0 L-30 2 Z" fill="#666"/>
<rect x="22" y="-5.5" width="5" height="11" fill="#fff"/>
<rect x="26" y="-5.5" width="10" height="11" rx="3" fill="#f2a3a3"/>
</g></svg>
<svg style="left:0px;top:0px" width="2370" height="140" viewBox="0 0 2370 140"><path d="M2326.5 87.5 H2342.0 L2348.5 94.0 V116.5 H2326.5 Z" fill="#fff" stroke="#777" stroke-width="1.6"/><path d="M2342.0 87.5 V94.0 H2348.5" fill="#f2f2f2" stroke="#777" stroke-width="1.2"/><rect x="2341" y="93.8" width="9" height="9" fill="#fff"/><path d="M2342 95 H2350 V92.8 L2355 97.4 L2350 102 V99.7 H2342 Z" fill="#4f7fb1"/><path d="M2328.5 107 L2331 105.5 L2334.8 109.5 L2346.9 101 L2334.8 113.2 Z" fill="#7dc02a"/></svg>
<svg style="left:0px;top:0px" width="2370" height="200" viewBox="0 0 2370 200"><path d="M2326.5 155.5 H2342.0 L2348.5 162.0 V184.5 H2326.5 Z" fill="#fff" stroke="#777" stroke-width="1.6"/><path d="M2342.0 155.5 V162.0 H2348.5" fill="#f2f2f2" stroke="#777" stroke-width="1.2"/><rect x="2341" y="161.8" width="9" height="9" fill="#fff"/><path d="M2342 163 H2350 V160.8 L2355.2 165.4 L2350 170 V168 H2342 Z" fill="#4f7fb1"/><path d="M2332.5 172 C2337 173 2340 177 2343 181.5 M2343 171.5 C2338 174 2334 177 2332.5 181.5" stroke="#c8403a" stroke-width="2.2" fill="none" stroke-linecap="round"/></svg>
<svg style="left:0px;top:0px" width="2560" height="140" viewBox="0 0 2560 140"><path d="M2529.5 87.5 H2545.5 L2552 94.0 V116.5 H2529.5 Z" fill="#fff" stroke="#777" stroke-width="1.2"/><path d="M2545.5 87.5 V94.0 H2552" fill="#f2f2f2" stroke="#777" stroke-width="1.2"/><path d="M2522 97.5 L2527 93 V95.2 H2535 V99.8 H2527 V102 Z" fill="#4f7fb1"/></svg>
<svg style="left:0px;top:0px" width="2570" height="200" viewBox="0 0 2570 200"><path d="M2529.5 155.5 H2545.5 L2552 162.0 V184.5 H2529.5 Z" fill="#fff" stroke="#777" stroke-width="1.2"/><path d="M2545.5 155.5 V162.0 H2552" fill="#f2f2f2" stroke="#777" stroke-width="1.2"/><rect x="2544" y="160" width="10" height="10" fill="#fff"/><path d="M2545 163 H2553 V160.8 L2558.2 165.4 L2553 170 V167.8 H2545 Z" fill="#4f7fb1"/></svg>
<svg style="left:0px;top:0px" width="2740" height="140" viewBox="0 0 2740 140"><path d="M2707.5 87.5 H2723.5 L2730 94.0 V116.5 H2707.5 Z" fill="#fff" stroke="#777" stroke-width="1.2"/><path d="M2723.5 87.5 V94.0 H2730" fill="#f2f2f2" stroke="#777" stroke-width="1.2"/><path d="M2705 96.8 Q2712 88.5 2719 96.8 Q2712 105 2705 96.8 Z" fill="#fff" stroke="#4f7fb1" stroke-width="1.3"/><circle cx="2712" cy="96.6" r="2.6" fill="#4f7fb1"/><path d="M2710 105.3 H2722 M2710 109.5 H2719" stroke="#d02a22" stroke-width="1.2"/></svg>
<svg style="left:0px;top:0px" width="2740" height="200" viewBox="0 0 2740 200"><rect x="2704.8" y="156.8" width="27" height="26.5" fill="#fff" stroke="#777" stroke-width="1.2"/><rect x="2705.4" y="157.4" width="25.8" height="3.6" fill="#8faaee"/><path d="M2707 167.5 H2717" stroke="#8faaee" stroke-width="1.2"/><path d="M2707 171.5 H2721" stroke="#d02a22" stroke-width="1.2"/><path d="M2707 175.5 H2717" stroke="#aaa" stroke-width="1.2"/></svg>
<svg style="left:0px;top:0px" width="2170" height="260" viewBox="0 0 2170 260"><path d="M2162 245 V258 H2149 Z" fill="#8c8c8c"/></svg>
<svg style="left:0px;top:0px" width="2860" height="260" viewBox="0 0 2860 260"><path d="M2851 245 V258 H2838 Z" fill="#8c8c8c"/></svg>
<svg style="left:0px;top:0px" width="50" height="320" viewBox="0 0 50 320"><path d="M20 280 H45 M20 286 H45 M20 292 H45 M20 298 H45 M20 304 H45" stroke="#777" stroke-width="2"/></svg>
<svg style="left:0px;top:0px" width="110" height="320" viewBox="0 0 110 320"><circle cx="89.9" cy="281.2" r="5.9" fill="none" stroke="#d0dcf6" stroke-width="0.9"/>
<circle cx="89.9" cy="281.2" r="3.9" fill="none" stroke="#8faaf0" stroke-width="1"/>
<path d="M88.4 297.5 V281.4 Q88.4 279.2 90.5 279.2 Q92.6 279.2 92.6 281.4 V286.5 Q92.6 284.4 94.5 284.4 Q96.6 284.4 96.6 286.8 V288.5 Q96.6 286.3 98.5 286.3 Q100.5 286.3 100.5 288.8 V290.3 Q100.5 288.3 102.1 288.3 Q103.7 288.3 103.7 290.8 V297 Q103.7 302 101.5 305.5 Q100.5 307.4 98.5 307.4 H91 Q89 307.4 87.5 305 Q85.5 301 84.5 297.5 V292.3 Q84.5 290.3 86.4 290.3 Q88.4 290.3 88.4 293 Z" fill="#fff" stroke="#777" stroke-width="1.2"/>
<path d="M92.6 286.5 V295.4 M96.6 288.5 V295.4 M100.5 290.3 V295.4 M88.4 293 V297.6" stroke="#777" stroke-width="1"/></svg>
<svg style="left:0px;top:0px" width="170" height="320" viewBox="0 0 170 320"><path d="M144.5 277.5 H160 L166.5 284 V306.5 H144.5 Z" fill="#fff" stroke="#777" stroke-width="1.2"/><path d="M160 277.5 V284 H166.5" fill="#f2f2f2" stroke="#777" stroke-width="1"/><path d="M157.5 304 h1.5 M160.5 304 h1.5 M163.5 304 h1.5" stroke="#777" stroke-width="1.5"/></svg>
<svg style="left:0px;top:0px" width="210" height="320" viewBox="0 0 210 320"><path d="M186 287 H201.2 L193.6 294.8 Z" fill="#444"/></svg>
<svg style="left:0px;top:0px" width="260" height="320" viewBox="0 0 260 320"><path d="M217.5 282 Q217.5 279.5 220 279.5 H230 L232 282.5 H242 Q244.7 282.5 244.7 285 V304.7 H219.5 Q217.5 304.7 217.5 302 Z" fill="#fce9bc" stroke="#c8975a" stroke-width="1.2"/><path d="M223 289.6 H250 L243.5 304.7 H217.5 Z" fill="#fde8bb" stroke="#c8975a" stroke-width="1.2" stroke-linejoin="round"/></svg>
<svg style="left:0px;top:0px" width="290" height="320" viewBox="0 0 290 320"><path d="M264 287 H279 L271.5 294.8 Z" fill="#444"/></svg>
<svg style="left:0px;top:0px" width="345" height="320" viewBox="0 0 345 320"><path d="M311.5 278.5 H337.5 V304.5 H314.5 L311.5 301.5 Z" fill="#8faef0" stroke="#666" stroke-width="1"/><rect x="316.5" y="278.5" width="16" height="10.8" fill="#f3f6fd" stroke="#666" stroke-width="1"/><rect x="317.7" y="297.3" width="14" height="7.2" fill="#f3f6fd" stroke="#666" stroke-width="1"/></svg>
<svg style="left:0px;top:0px" width="400" height="320" viewBox="0 0 400 320"><path d="M375 287 Q386 276 393 285 Q396 292 381 304" fill="none" stroke="#b3b3b3" stroke-width="2.2"/><path d="M373 283.5 V290.7 H380.5 Z" fill="#b3b3b3"/></svg>
<svg style="left:0px;top:0px" width="440" height="320" viewBox="0 0 440 320"><path d="M417 287.2 H432 L424.5 294.7 Z" fill="#8a8a8a"/></svg>
<svg style="left:0px;top:0px" width="480" height="320" viewBox="0 0 480 320"><path d="M476 287 Q465 276 458 285 Q455 292 470 304" fill="none" stroke="#b3b3b3" stroke-width="2.2"/><path d="M478 283.5 V290.7 H470.5 Z" fill="#b3b3b3"/></svg>
<svg style="left:0px;top:0px" width="520" height="320" viewBox="0 0 520 320"><path d="M500 287.2 H515.2 L507.6 294.7 Z" fill="#8a8a8a"/></svg>
<svg style="left:0px;top:0px" width="580" height="320" viewBox="0 0 580 320"><path d="M555.5 276.8 V301 L560.5 296.5 L565 306 L569 304.5 L565 295 L572 294.5 Z" fill="#fff" stroke="#777" stroke-width="1.2" stroke-linejoin="miter"/></svg>
<svg style="left:0px;top:0px" width="610" height="320" viewBox="0 0 610 320"><path d="M594.5 278.5 L598 282 L594.5 285.5 M598.5 278.5 L602 282 L598.5 285.5" fill="none" stroke="#777" stroke-width="1.2"/></svg>
<svg style="left:0px;top:0px" width="700" height="320" viewBox="0 0 700 320"><path d="M662.5 282.5 H677 L683.5 289 V309.5 H662.5 Z" fill="#fff" stroke="#888" stroke-width="1"/>
<path d="M677 282.5 V289 H683.5" fill="#f2f2f2" stroke="#888" stroke-width="0.8"/>
<path d="M665 291.5 H681 M665 294.5 H681 M665 297.5 H677 M665 300.5 H677 M665 303.5 H677 M665 306.5 H677" stroke="#e7a8a6" stroke-width="0.9"/>
<rect x="678" y="297" width="10.5" height="13" fill="#d0302c"/>
<path d="M680.5 300 H686 M683.25 300 V308" stroke="#fff" stroke-width="2"/></svg>
</body></html>
